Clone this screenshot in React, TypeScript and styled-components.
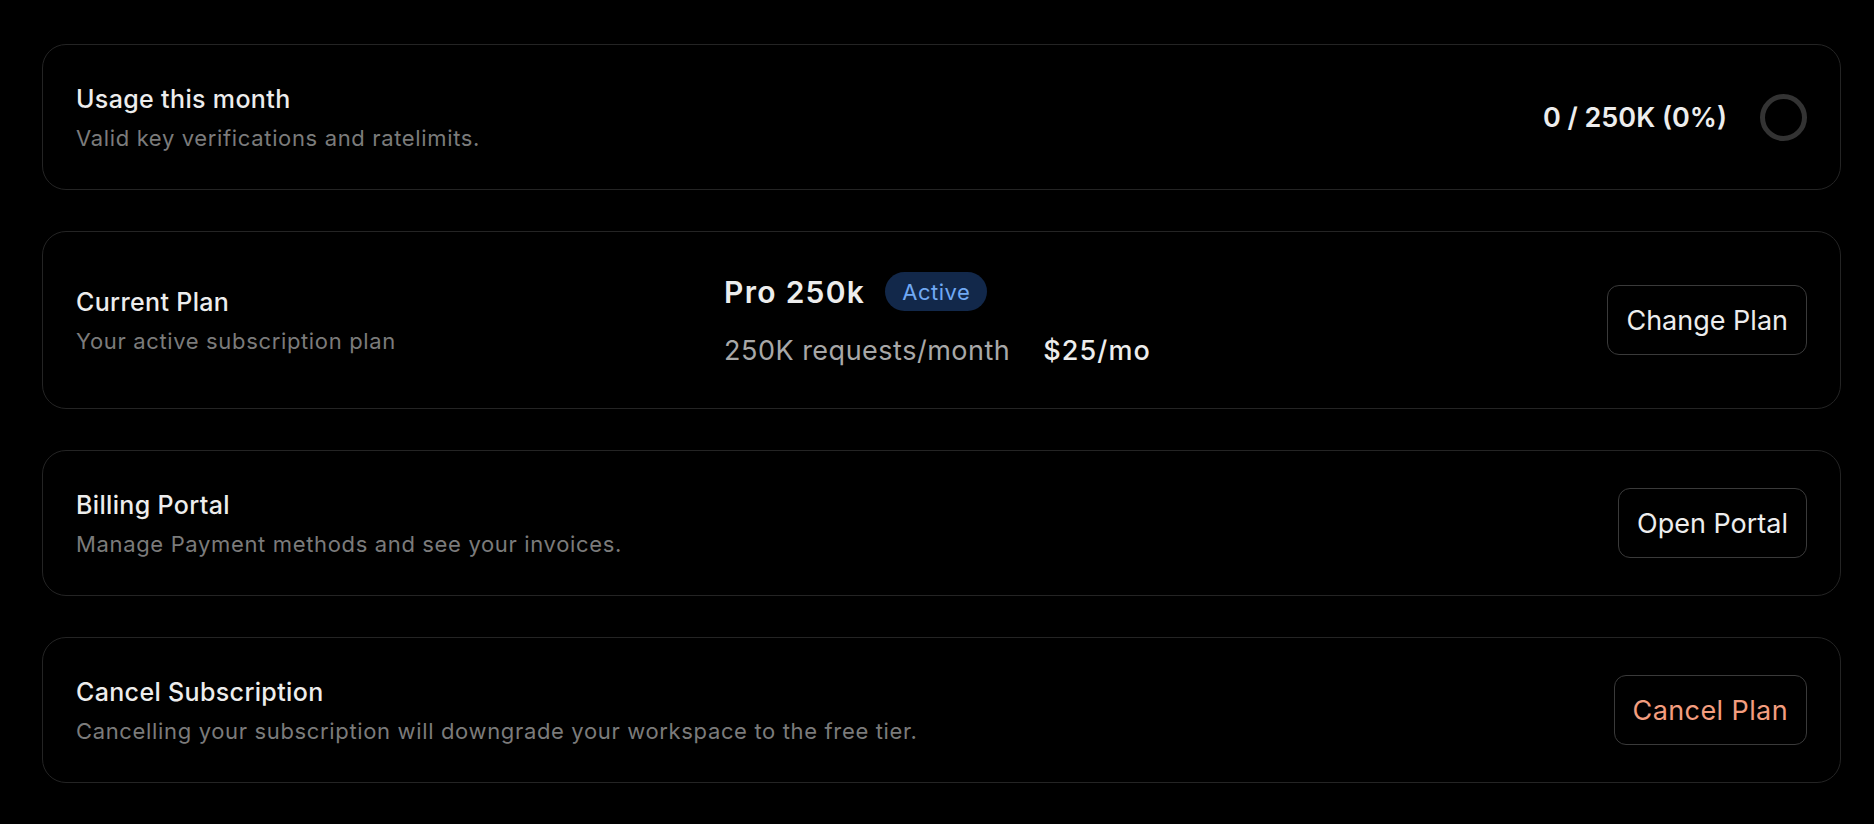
import React from 'react';
import styled, { createGlobalStyle } from 'styled-components';

const GlobalStyle = createGlobalStyle`
  html, body {
    margin: 0;
    padding: 0;
    background: #000;
  }
  body {
    font-family: Inter, "Noto Sans", "Liberation Sans", sans-serif;
    color: #ededed;
    -webkit-font-smoothing: antialiased;
  }
`;

const Page = styled.div`
  display: flex;
  flex-direction: column;
  gap: 41px;
  padding: 44px 33px 37px 42px;
  background: #000;
`;

const Card = styled.section`
  display: flex;
  align-items: center;
  justify-content: space-between;
  padding: 35.5px 33px;
  border: 1.5px solid #242424;
  border-radius: 24px;
`;

const PlanCard = styled(Card)`
  display: grid;
  grid-template-columns: 648px 1fr auto;
`;

const Info = styled.div`
  display: flex;
  flex-direction: column;
  gap: 5px;
`;

const Title = styled.h3`
  margin: 0;
  font-size: 25px;
  line-height: 36px;
  font-weight: 500;
  letter-spacing: 0.35px;
  color: #ededed;
`;

const Description = styled.p`
  margin: 0;
  font-size: 22px;
  line-height: 32px;
  font-weight: 400;
  letter-spacing: 0.65px;
  color: #7b7b7b;
`;

const Usage = styled.div`
  display: flex;
  align-items: center;
  gap: 33px;
`;

const UsageText = styled.span`
  font-size: 27px;
  font-weight: 600;
  color: #ededed;
`;

const Ring = styled.div`
  width: 47px;
  height: 47px;
  box-sizing: border-box;
  border-radius: 50%;
  border: 5px solid #333;
`;

const PlanDetails = styled.div`
  display: flex;
  flex-direction: column;
  gap: 13px;
`;

const PlanRow = styled.div`
  display: flex;
  align-items: center;
  height: 48px;
  gap: 20px;
`;

const PlanName = styled.span`
  font-size: 30px;
  font-weight: 600;
  letter-spacing: 1.3px;
  color: #ededed;
`;

const Badge = styled.span`
  display: inline-flex;
  align-items: center;
  height: 39px;
  padding: 0 17px;
  border-radius: 999px;
  background: #12284a;
  color: #70a9f4;
  font-size: 22px;
  font-weight: 400;
  letter-spacing: 0.5px;
`;

const MetaRow = styled.div`
  display: flex;
  align-items: center;
  gap: 33px;
  line-height: 44px;
  font-size: 27px;
`;

const Quota = styled.span`
  color: #a8a8a8;
  letter-spacing: 0.5px;
`;

const Price = styled.span`
  color: #ededed;
  font-weight: 500;
  letter-spacing: 1.1px;
`;

const Button = styled.button<{ $danger?: boolean }>`
  height: 70px;
  padding: 0 18px;
  border: 1.5px solid #3a3a3a;
  border-radius: 12px;
  background: transparent;
  font-family: inherit;
  font-size: 27px;
  font-weight: 400;
  letter-spacing: ${(p) => (p.$danger ? '0.4px' : '0')};
  color: ${(p) => (p.$danger ? '#f39d7f' : '#ededed')};
  cursor: pointer;
  justify-self: end;
`;

const App = () => (
  <>
    <GlobalStyle />
    <Page>
      <Card>
        <Info>
          <Title>Usage this month</Title>
          <Description>Valid key verifications and ratelimits.</Description>
        </Info>
        <Usage>
          <UsageText>0 / 250K (0%)</UsageText>
          <Ring />
        </Usage>
      </Card>

      <PlanCard>
        <Info>
          <Title>Current Plan</Title>
          <Description>Your active subscription plan</Description>
        </Info>
        <PlanDetails>
          <PlanRow>
            <PlanName>Pro 250k</PlanName>
            <Badge>Active</Badge>
          </PlanRow>
          <MetaRow>
            <Quota>250K requests/month</Quota>
            <Price>$25/mo</Price>
          </MetaRow>
        </PlanDetails>
        <Button>Change Plan</Button>
      </PlanCard>

      <Card>
        <Info>
          <Title>Billing Portal</Title>
          <Description>Manage Payment methods and see your invoices.</Description>
        </Info>
        <Button>Open Portal</Button>
      </Card>

      <Card>
        <Info>
          <Title>Cancel Subscription</Title>
          <Description>
            Cancelling your subscription will downgrade your workspace to the free tier.
          </Description>
        </Info>
        <Button $danger>Cancel Plan</Button>
      </Card>
    </Page>
  </>
);

export default App;
